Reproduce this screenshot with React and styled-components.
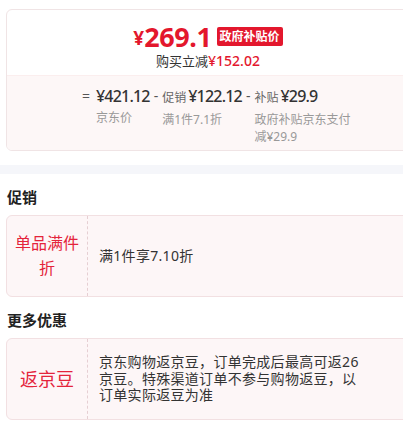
import styled, { createGlobalStyle } from "styled-components";

const GlobalStyle = createGlobalStyle`
  html, body {
    margin: 0;
    padding: 0;
    background: #fff;
    overflow: hidden;
  }
  body {
    font-family: "Noto Sans", "Noto Sans CJK SC", sans-serif;
    color: #333;
  }
`;

const RED = "#e3172d";

const Page = styled.div`
  width: 416px;
`;

const CardWrap = styled.div`
  padding: 9px 6px 14px;
`;

const Card = styled.div`
  border: 1px solid #f0e4e5;
  border-radius: 6px;
  overflow: hidden;
  background: #fff;
`;

const Top = styled.div`
  display: flex;
  flex-direction: column;
  align-items: center;
  padding: 11px 0 5px;
`;

const PriceRow = styled.div`
  display: flex;
  align-items: center;
  height: 31px;
  color: ${RED};
  font-weight: 700;
`;

const Yen = styled.span`
  font-size: 19px;
  line-height: 1;
  margin-top: 4px;
`;

const BigNum = styled.span`
  font-size: 27px;
  line-height: 1;
  letter-spacing: -0.4px;
`;

const Badge = styled.span`
  margin-left: 5px;
  height: 19px;
  line-height: 19px;
  padding: 0 3px;
  border-radius: 2px;
  background: ${RED};
  color: #fff;
  font-size: 12px;
  font-weight: 700;
`;

const SaveLine = styled.div`
  line-height: 18px;
  font-size: 13px;
  color: #333;
`;

const SaveAmount = styled.span`
  color: ${RED};
  font-size: 14px;
  font-weight: 500;
`;

const Bottom = styled.div`
  display: flex;
  align-items: flex-start;
  background: #fdf7f7;
  border-top: 1px solid #fbeeee;
  padding: 9px 0 5px 75px;
`;

const Item = styled.div`
  display: flex;
  align-items: flex-start;
`;

const Op = styled.span`
  font-size: 14px;
  line-height: 22px;
  color: #555;
  margin: 0 ${(p) => (p.$first ? 6 : 4)}px 0 ${(p) => (p.$first ? 0 : 3)}px;
`;

const Col = styled.div`
  display: flex;
  flex-direction: column;
`;

const ValueLine = styled.div`
  display: flex;
  align-items: baseline;
  line-height: 22px;
  white-space: nowrap;
`;

const Tag = styled.span`
  font-size: 12px;
  color: #666;
  margin-right: 2px;
`;

const Value = styled.span`
  font-size: 16px;
  font-weight: 500;
  color: #333;
  letter-spacing: -0.8px;
  padding-right: 1px;
`;

const Sub = styled.div`
  margin-top: 2px;
  font-size: 12px;
  line-height: 17px;
  color: #999;
  max-width: ${(p) => p.$max || 200}px;
`;

const Band = styled.div`
  height: 9px;
  background: #f5f6fa;
`;

const Section = styled.div`
  padding: 0 6px;
`;

const Heading = styled.div`
  padding: 12px 0 7px 1px;
  font-size: 15px;
  line-height: 22px;
  font-weight: 700;
  color: #222;
`;

const Box = styled.div`
  display: flex;
  min-height: 82px;
  box-sizing: border-box;
  border: 1px solid #f2e0e2;
  border-radius: 6px;
  background: #fdf6f7;
`;

const BoxLabel = styled.div`
  flex: 0 0 81px;
  box-sizing: border-box;
  display: flex;
  align-items: center;
  justify-content: center;
  padding: 0 8px;
  border-right: 1px dashed #e6cfd3;
  color: #e4243b;
  font-size: ${(p) => p.$size}px;
  line-height: 25px;
  text-align: center;
`;

const BoxText = styled.div`
  display: flex;
  align-items: center;
  padding: 8px 0 8px 11px;
  max-width: 268px;
  font-size: 14px;
  letter-spacing: 0.3px;
  line-height: 16.5px;
  color: #333;
`;

export default function App() {
  return (
    <Page>
      <GlobalStyle />
      <CardWrap>
        <Card>
          <Top>
            <PriceRow>
              <Yen>¥</Yen>
              <BigNum>269.1</BigNum>
              <Badge>政府补贴价</Badge>
            </PriceRow>
            <SaveLine>
              购买立减<SaveAmount>¥152.02</SaveAmount>
            </SaveLine>
          </Top>
          <Bottom>
            <Item>
              <Op $first>=</Op>
              <Col>
                <ValueLine>
                  <Value>¥421.12</Value>
                </ValueLine>
                <Sub>京东价</Sub>
              </Col>
            </Item>
            <Item>
              <Op>-</Op>
              <Col>
                <ValueLine>
                  <Tag>促销</Tag>
                  <Value>¥122.12</Value>
                </ValueLine>
                <Sub>满1件7.1折</Sub>
              </Col>
            </Item>
            <Item>
              <Op>-</Op>
              <Col>
                <ValueLine>
                  <Tag>补贴</Tag>
                  <Value>¥29.9</Value>
                </ValueLine>
                <Sub $max={100}>政府补贴京东支付减¥29.9</Sub>
              </Col>
            </Item>
          </Bottom>
        </Card>
      </CardWrap>
      <Band />
      <Section>
        <Heading>促销</Heading>
        <Box>
          <BoxLabel $size={16}>单品满件折</BoxLabel>
          <BoxText>满1件享7.10折</BoxText>
        </Box>
        <Heading>更多优惠</Heading>
        <Box>
          <BoxLabel $size={18}>返京豆</BoxLabel>
          <BoxText>京东购物返京豆，订单完成后最高可返26京豆。特殊渠道订单不参与购物返豆，以订单实际返豆为准</BoxText>
        </Box>
      </Section>
    </Page>
  );
}
